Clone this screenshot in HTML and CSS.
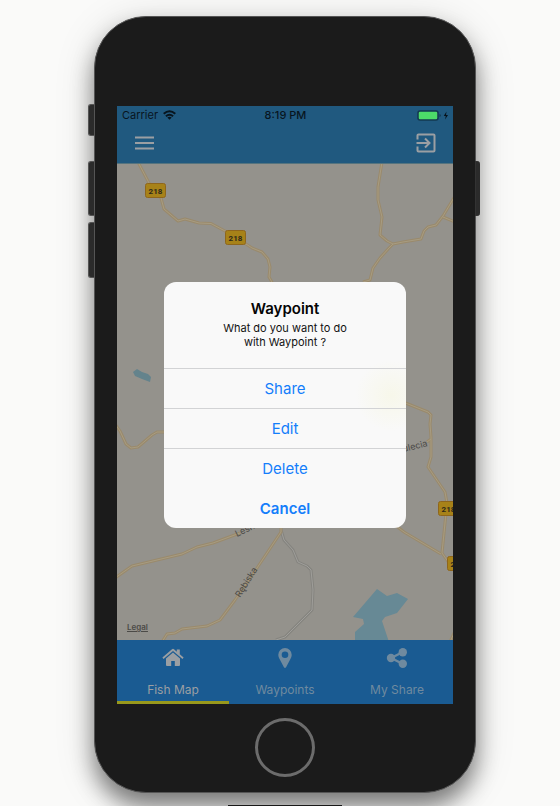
FILE: index.html
```html
<!DOCTYPE html>
<html lang="en">
<head>
<meta charset="utf-8">
<meta name="viewport" content="width=device-width, initial-scale=1">
<title>Fish Map</title>
<link rel="stylesheet" href="styles.css">
</head>
<body>
<div class="stage">
  <div class="phone">
    <span class="key key-mute"></span>
    <span class="key key-up"></span>
    <span class="key key-down"></span>
    <span class="key key-power"></span>

    <div class="screen">
      <header class="top">
        <div class="status">
          <span class="carrier">Carrier
            <svg class="wifi" viewBox="0 0 13 10" aria-hidden="true"><g fill="none" stroke="#08151e" stroke-width="2"><path d="M.7 3.8Q6.500-1.200 12.300 3.800"/><path d="M2.900 6.200Q6.500 3.200 10.100 6.200"/></g><path fill="#08151e" d="M4.300 7.600Q6.500 6 8.700 7.600L6.500 9.800z"/></svg>
          </span>
          <span class="clock">8:19 PM</span>
          <span class="power">
            <svg class="battery" viewBox="0 0 32 11" aria-hidden="true"><rect x="1" y="1" width="20" height="9" rx="2" fill="#4cdb69" stroke="#123850" stroke-width="1.500"/><path d="M22.500 4v3q1.300-.4 1.300-1.500T22.500 4" fill="#123850"/><path d="M29.500 1.500 26.800 6h2l-.8 3.500L31 5h-2z" fill="#06121a"/></svg>
          </span>
        </div>
        <div class="toolbar">
          <button class="icon-button" type="button" aria-label="Menu">
            <svg width="20" height="14" viewBox="0 0 20 14"><path fill="#9b9fa3" d="M0 .5h19v2H0zm0 5.500h19v2H0zm0 5.500h19v2H0z"/></svg>
          </button>
          <button class="icon-button" type="button" aria-label="Log out">
            <svg width="20" height="20" viewBox="0 0 20 20" fill="none" stroke="#9b9fa3" stroke-width="2"><path d="M1.500 6.500V2.500a1 1 0 0 1 1-1h15a1 1 0 0 1 1 1v15a1 1 0 0 1-1 1h-15a1 1 0 0 1-1-1v-4"/><path d="M.5 10h13M9 5.500l4.500 4.500L9 14.500"/></svg>
          </button>
        </div>
      </header>

      <main class="map">
        <svg class="map-art" viewBox="117 164 336 476" preserveAspectRatio="xMidYMid slice">
          <defs>
            <g id="roads">
              <path d="M138 162 149 183 161 198 164 209 178 221 185 219 199 223 211 223.500 225 231 246 244 252 248 262 252 268 259 270 267 269 277 273 284"/>
              <path d="M382 162 378 187V200L382 217 380 235 387 241 393 244 403 242 421 239 424 231 428 227 436 225 443 216 455 196M443 217 455 222M393 244 389 248 380 258 373 268 370 280 363 282"/>
              <path d="M115 424 120 431 126 444 131 448 138 447 152 435 157 432 166 432"/>
              <path d="M115 578 132 566 182 554 197 547 213 543 240 533"/>
              <path d="M162 642 167 634 175 633 182 629 207 626 220 620 235 600 257 568 281 532V522"/>
              <path d="M403 402 428 412 431 415 430 424 431 437V457L428 467 445 492 447 503 442 553 449 563M431 439 427 442M395 525 404 532 441 554M455 631 450 642"/>
            </g>
            <g id="lanes">
              <path d="M281 530 284 540 293 550 298 562 307 566 311 570 313 590 312 610 285 637 276 640"/>
            </g>
          </defs>
          <path fill="#678995" d="M377 589 387 596 397 593 408 599 397 613 385 617 382 621 389 642H355V632L364 624 363 619 353 617z"/>
          <path fill="#64838c" d="M137 369 142 372 148 374 151 377 150 382 142 379 135 376 133 372z"/>
          <use href="#lanes" class="lane-edge"/>
          <use href="#lanes" class="lane-core"/>
          <use href="#roads" class="road-edge"/>
          <use href="#roads" class="road-core"/>
          <g class="shield">
            <rect x="145.500" y="183.500" width="20" height="14" rx="2"/><text x="155.500" y="194">218</text>
            <rect x="225.500" y="230.500" width="20" height="14" rx="2"/><text x="235.500" y="241">218</text>
            <rect x="438.500" y="501.500" width="20" height="14" rx="2"/><text x="448.500" y="512">218</text>
            <rect x="447.500" y="556.500" width="20" height="14" rx="2"/><text x="457.500" y="567">218</text>
          </g>
          <g class="street">
            <text transform="translate(237 537) rotate(-26)">Leśna</text>
            <text transform="translate(240 598) rotate(-58)">Rębiska</text>
            <text text-anchor="end" transform="translate(428 446) rotate(-14)">Stulecia</text>
          </g>
        </svg>
        <a class="legal" href="#legal">Legal</a>
      </main>

      <nav class="tabs">
        <a class="tab tab-current" href="#map" aria-current="page">
          <svg width="22" height="20" viewBox="0 0 22 20" fill="currentColor"><path d="M11 4.500 18 10.500V17a1 1 0 0 1-1 1h-4.200v-5H9.200v5H5a1 1 0 0 1-1-1v-6.500z"/><path d="M10 1.300a1.500 1.500 0 0 1 2 0l2.800 2.400V1.500h3V6.300L21.600 9.600 20.500 10.900 11 2.900 1.500 10.900.4 9.600z"/></svg>
          <span>Fish Map</span>
        </a>
        <a class="tab" href="#waypoints">
          <svg width="22" height="20" viewBox="0 0 22 20" fill="currentColor"><path fill-rule="evenodd" d="M11 0a6.700 6.700 0 0 1 6.700 6.700c0 2-.9 3.600-1.800 5.300L12.200 19q-1.200 1.800-2.400 0L6.100 12C5.200 10.300 4.300 8.700 4.300 6.700A6.700 6.700 0 0 1 11 0m0 3.400a3.300 3.300 0 1 0 0 6.600 3.300 3.300 0 0 0 0-6.600"/></svg>
          <span>Waypoints</span>
        </a>
        <a class="tab" href="#share">
          <svg width="22" height="20" viewBox="0 0 22 20" fill="currentColor"><path d="M5 10 17 4M5 10l12 6" stroke="currentColor" stroke-width="2.500"/><circle cx="5" cy="10" r="4.200"/><circle cx="16.800" cy="4.200" r="4.200"/><circle cx="16.800" cy="15.800" r="4.200"/></svg>
          <span>My Share</span>
        </a>
      </nav>

      <div class="overlay">
        <section class="alert" role="alertdialog" aria-labelledby="alert-title" aria-describedby="alert-text">
          <div class="alert-head">
            <h1 id="alert-title">Waypoint</h1>
            <p id="alert-text">What do you want to do<br>with Waypoint ?</p>
          </div>
          <button class="action" type="button">Share</button>
          <button class="action" type="button">Edit</button>
          <button class="action" type="button">Delete</button>
          <button class="action action-cancel" type="button">Cancel</button>
        </section>
      </div>
    </div>

    <button class="home" type="button" aria-label="Home"></button>
  </div>
  <div class="dock"></div>
</div>
</body>
</html>
```
FILE: styles.css
```css
* {
  box-sizing: border-box;
}

body {
  margin: 0;
  background: #fafaf9;
  font-family: Inter, "Liberation Sans", sans-serif;
}

button {
  margin: 0;
  padding: 0;
  border: 0;
  background: none;
  font: inherit;
}

svg {
  display: block;
}

.stage {
  display: flex;
  flex-direction: column;
  min-height: 100vh;
  padding: 16px 84px 0 94px;
  overflow: hidden;
}

.phone {
  position: relative;
  flex: 1;
  display: flex;
  flex-direction: column;
  align-items: center;
  gap: 14px;
  padding: 89px 22px 15px;
  border: 1px solid #555;
  border-radius: 52px;
  background: #1b1b1b;
  box-shadow: 0 14px 22px rgba(0, 0, 0, 0.45), 0 6px 40px rgba(0, 0, 0, 0.15);
}

.key {
  position: absolute;
  left: -7px;
  width: 6px;
  border: 1px solid #555;
  border-right: 0;
  border-radius: 3px 0 0 3px;
  background: #2b2b2b;
}

.key-mute {
  top: 87px;
  height: 32px;
}

.key-up {
  top: 144px;
  height: 55px;
}

.key-down {
  top: 205px;
  height: 56px;
}

.key-power {
  top: 144px;
  left: auto;
  right: -5px;
  width: 5px;
  height: 55px;
  border-color: #333;
  border-radius: 0 3px 3px 0;
}

.screen {
  position: relative;
  flex: 1;
  align-self: stretch;
  display: flex;
  flex-direction: column;
  overflow: hidden;
}

.top {
  border-bottom: 1px solid #55747f;
  background: #20597f;
}

.status {
  display: grid;
  grid-template-columns: 1fr auto 1fr;
  align-items: center;
  height: 18px;
  padding: 0 4px 0 5px;
  color: #08151e;
  font-size: 11px;
}

.carrier {
  display: flex;
  align-items: center;
  gap: 5px;
}

.wifi {
  width: 13px;
  height: 10px;
}

.clock {
  font-weight: 500;
}

.power {
  justify-self: end;
}

.battery {
  width: 32px;
  height: 11px;
}

.toolbar {
  display: flex;
  align-items: center;
  justify-content: space-between;
  height: 39px;
  padding: 0 17px 2px 18px;
}

.map {
  position: relative;
  flex: 1;
  min-height: 300px;
  background: #94928c;
}

.map-art {
  position: absolute;
  inset: 0;
  width: 100%;
  height: 100%;
}

.road-edge,
.road-core,
.lane-edge,
.lane-core {
  fill: none;
  stroke-linejoin: round;
}

.road-edge {
  stroke: #9a8a6c;
  stroke-width: 3px;
}

.road-core {
  stroke: #a79c82;
  stroke-width: 1px;
}

.lane-edge {
  stroke: #85847f;
  stroke-width: 3px;
}

.lane-core {
  stroke: #9f9e9a;
  stroke-width: 1px;
}

.shield rect {
  fill: #a78218;
  stroke: #8f661c;
}

.shield text {
  fill: #2d2818;
  font-family: Roboto, "Liberation Sans", sans-serif;
  font-size: 8px;
  font-weight: 700;
  text-anchor: middle;
}

.street text {
  fill: #4a4946;
  font-size: 9px;
}

.legal {
  position: absolute;
  left: 10px;
  bottom: 8px;
  color: #4b4a47;
  font-size: 8px;
  font-weight: 600;
  line-height: 10px;
}

.tabs {
  display: grid;
  grid-template-columns: repeat(3, 1fr);
  height: 64px;
  background: #1a5b92;
}

.tab {
  display: flex;
  flex-direction: column;
  align-items: center;
  gap: 14px;
  padding-top: 8px;
  border-bottom: 3px solid transparent;
  color: #6f8a9f;
  font-size: 12px;
  line-height: 16px;
  text-decoration: none;
}

.tab-current {
  border-bottom-color: #98981c;
  color: #9b9fa3;
}

.overlay {
  position: absolute;
  inset: 0;
  display: grid;
  place-items: center;
}

.alert {
  width: 72%;
  overflow: hidden;
  border-radius: 12px;
  background: radial-gradient(circle at 94% 46%, #f7f7ea, transparent 36px), #f9f9f9;
  text-align: center;
}

.alert-head {
  height: 86px;
  padding-top: 17px;
}

.alert h1 {
  margin: 0;
  color: #050505;
  font-size: 15px;
  font-weight: 600;
  line-height: 20px;
}

.alert p {
  margin: 2px 0 0;
  color: #111;
  font-size: 11px;
  line-height: 14px;
}

.action {
  display: block;
  width: 100%;
  height: 40px;
  border-top: 1px solid #d2d3d5;
  color: #147efb;
  font-size: 15px;
}

.action-cancel {
  border-top-color: transparent;
  font-weight: 600;
}

.home {
  width: 60px;
  height: 59px;
  border: 3px solid #6c6c6c;
  border-radius: 50%;
}

.dock {
  align-self: center;
  width: 114px;
  height: 13px;
  border-bottom: 1px solid #222;
}
```
